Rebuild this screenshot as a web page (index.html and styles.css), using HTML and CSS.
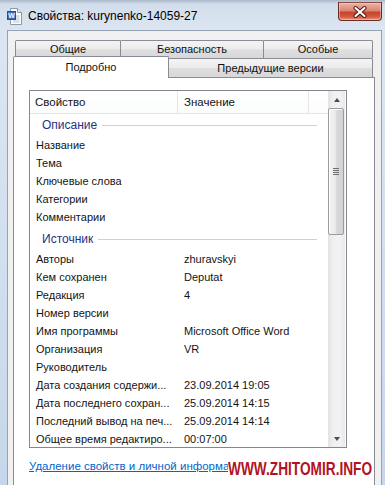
FILE: index.html
```html
<!DOCTYPE html>
<html lang="ru">
<head>
<meta charset="utf-8">
<title>Свойства</title>
<link rel="stylesheet" href="styles.css">
</head>
<body>
<div class="window">
  <div class="titlebar">
    <svg class="app-icon" width="15" height="17" viewBox="0 0 15 17">
      <path d="M3.5 0.5 H10.5 L14.5 4.5 V16.5 H3.5 Z" fill="#fbfcfd" stroke="#8e99a8"/>
      <path d="M10.5 0.5 V4.5 H14.5" fill="#e6ebf1" stroke="#8e99a8"/>
      <line x1="6" y1="8" x2="12.5" y2="8" stroke="#b7c3d2"/>
      <line x1="6" y1="10" x2="12.5" y2="10" stroke="#b7c3d2"/>
      <line x1="6" y1="12" x2="12.5" y2="12" stroke="#b7c3d2"/>
      <line x1="6" y1="14" x2="12.5" y2="14" stroke="#b7c3d2"/>
      <rect x="0.5" y="3.5" width="8" height="8" fill="#3d6ec0" stroke="#24509a"/>
      <text x="4.5" y="10.3" font-family="Liberation Sans, sans-serif" font-size="7" font-weight="bold" fill="#fff" text-anchor="middle">W</text>
    </svg>
    <span class="title">Свойства: kurynenko-14059-27</span>
    <div class="close">
      <svg width="14" height="12" viewBox="0 0 14 12">
        <path d="M2.5 2 L11.5 10 M11.5 2 L2.5 10" stroke="#4a1208" stroke-width="4" stroke-linecap="round"/>
        <path d="M2.5 2 L11.5 10 M11.5 2 L2.5 10" stroke="#ffffff" stroke-width="2.2" stroke-linecap="round"/>
      </svg>
    </div>
  </div>

  <div class="client">
    <div class="tabrow row1">
      <div class="tab t-general">Общие</div>
      <div class="tab t-security">Безопасность</div>
      <div class="tab t-custom">Особые</div>
    </div>
    <div class="tabrow row2">
      <div class="tab selected t-details">Подробно</div>
      <div class="tab t-previous">Предыдущие версии</div>
    </div>

    <div class="panel">
      <div class="listview">
        <div class="lv-main">
          <div class="lv-head">
            <div class="hcell h-key">Свойство</div>
            <div class="hcell h-val">Значение</div>
            <div class="hcell h-fill"></div>
          </div>
          <div class="lv-body">
            <div class="group">Описание</div>
            <div class="row"><span class="k">Название</span><span class="v"></span></div>
            <div class="row"><span class="k">Тема</span><span class="v"></span></div>
            <div class="row"><span class="k">Ключевые слова</span><span class="v"></span></div>
            <div class="row"><span class="k">Категории</span><span class="v"></span></div>
            <div class="row"><span class="k">Комментарии</span><span class="v"></span></div>
            <div class="group group-next">Источник</div>
            <div class="row"><span class="k">Авторы</span><span class="v">zhuravskyi</span></div>
            <div class="row"><span class="k">Кем сохранен</span><span class="v">Deputat</span></div>
            <div class="row"><span class="k">Редакция</span><span class="v">4</span></div>
            <div class="row"><span class="k">Номер версии</span><span class="v"></span></div>
            <div class="row"><span class="k">Имя программы</span><span class="v">Microsoft Office Word</span></div>
            <div class="row"><span class="k">Организация</span><span class="v">VR</span></div>
            <div class="row"><span class="k">Руководитель</span><span class="v"></span></div>
            <div class="row"><span class="k">Дата создания содержи...</span><span class="v">23.09.2014 19:05</span></div>
            <div class="row"><span class="k">Дата последнего сохран...</span><span class="v">25.09.2014 14:15</span></div>
            <div class="row"><span class="k">Последний вывод на печ...</span><span class="v">25.09.2014 14:14</span></div>
            <div class="row"><span class="k">Общее время редактиро...</span><span class="v">00:07:00</span></div>
          </div>
        </div>
        <div class="scrollbar">
          <div class="sb-btn"><span class="arrow-up"></span></div>
          <div class="sb-thumb"><span class="grip"></span></div>
          <div class="sb-track"></div>
          <div class="sb-btn"><span class="arrow-down"></span></div>
        </div>
      </div>
      <div class="link-wrap"><a class="link" href="#">Удаление свойств и личной информации</a></div>
    </div>
  </div>

  <div class="watermark">WWW.ZHITOMIR.INFO</div>
</div>
</body>
</html>
```

FILE: styles.css
```css
* { box-sizing: border-box; }

html, body {
  margin: 0;
  padding: 0;
}

body {
  width: 385px;
  height: 485px;
  overflow: hidden;
  font-family: "Liberation Sans", Arial, sans-serif;
  font-size: 11px;
  color: #141414;
}

.window {
  position: relative;
  height: 485px;
  display: flex;
  flex-direction: column;
  background: linear-gradient(to bottom, #a9b7c8 0, #d2deec 4px, #dce6f2 30px, #c6d7eb 100%);
}

/* ---------- title bar ---------- */
.titlebar {
  height: 30px;
  flex: none;
  display: flex;
  align-items: flex-start;
}

.app-icon {
  margin: 8px 0 0 7px;
  flex: none;
}

.title {
  margin-left: 6px;
  padding-top: 9px;
  font-size: 12px;
  line-height: 14px;
  color: #000;
}

.close {
  margin-left: auto;
  margin-right: 3px;
  margin-top: 2px;
  width: 44px;
  height: 19px;
  border: 1px solid #6a2b22;
  border-top-color: #8e4a3e;
  border-radius: 0 0 4px 4px;
  background: linear-gradient(to bottom, #eab3a5 0%, #d98673 45%, #c5442c 55%, #cf5a3f 80%, #e5957c 100%);
  display: flex;
  align-items: center;
  justify-content: center;
  box-shadow: inset 0 0 0 1px rgba(255, 220, 210, 0.45);
}

/* ---------- client area ---------- */
.client {
  flex: 1;
  margin: 0 3px 0 7px;
  border: 1px solid #96a3b4;
  border-bottom: none;
  background: #f0f0f0;
  padding: 9px 0 0 5px;
  display: flex;
  flex-direction: column;
}

.tabrow {
  display: flex;
  align-items: flex-start;
  position: relative;
}

.row1 {
  margin-left: 2px;
  height: 18px;
}

.row2 {
  margin-top: -2px;
  height: 21px;
  z-index: 2;
}

.tab {
  text-align: center;
  border: 1px solid #898c95;
  border-bottom: none;
  border-radius: 2px 2px 0 0;
  background: linear-gradient(to bottom, #f4f4f4 0%, #ebebeb 48%, #dedede 52%, #d8d8d8 100%);
  color: #111;
  white-space: nowrap;
  font-size: 11px;
}

.row1 .tab {
  height: 18px;
  line-height: 17px;
}

.t-general { width: 106px; }
.t-security { width: 144px; margin-left: -1px; }
.t-custom { width: 110px; margin-left: -1px; }

.t-details { width: 156px; }
.t-previous { width: 205px; margin-left: -1px; }

.row2 .tab {
  margin-top: 2px;
  height: 19px;
  line-height: 18px;
}

.row2 .tab.selected {
  margin-top: 0;
  height: 22px;
  line-height: 20px;
  background: #fff;
  position: relative;
  z-index: 3;
}

/* ---------- panel ---------- */
.panel {
  width: 362px;
  flex: 1;
  border: 1px solid #898c95;
  border-bottom: none;
  background: #fff;
  padding: 12px 0 0 15px;
  position: relative;
  z-index: 1;
}

.listview {
  width: 318px;
  height: 358px;
  border: 1px solid #828790;
  display: flex;
  overflow: hidden;
  background: #fff;
}

.lv-main {
  width: 298px;
  flex: none;
  overflow: hidden;
}

.lv-head {
  display: flex;
  height: 23px;
  border-bottom: 1px solid #e5e5e5;
  background: linear-gradient(to bottom, #ffffff, #fbfcfc);
}

.hcell {
  line-height: 22px;
  white-space: nowrap;
  font-size: 11.5px;
}

.h-key {
  width: 148px;
  padding-left: 5px;
  border-right: 1px solid #e5e5e5;
}

.h-val {
  width: 131px;
  padding-left: 6px;
  border-right: 1px solid #e5e5e5;
}

.h-fill { flex: 1; }

.group {
  height: 22px;
  display: flex;
  align-items: center;
  padding-left: 12px;
  color: #1e3287;
  font-size: 12px;
  white-space: nowrap;
}

.group::after {
  content: "";
  flex: 1;
  height: 1px;
  background: #c9d2e0;
  margin: 0 11px 0 5px;
}

.group-next { margin-top: 2px; }

.row {
  display: flex;
  height: 18px;
  line-height: 18px;
  white-space: nowrap;
  font-size: 11px;
}

.k {
  width: 148px;
  flex: none;
  padding-left: 6px;
}

.v {
  padding-left: 6px;
}

/* ---------- scrollbar ---------- */
.scrollbar {
  width: 17px;
  flex: none;
  display: flex;
  flex-direction: column;
  background: linear-gradient(to right, #e3e3e3 0%, #f0f0f0 30%, #f2f2f2 70%, #e8e8e8 100%);
}

.sb-btn {
  height: 17px;
  flex: none;
  display: flex;
  align-items: center;
  justify-content: center;
}

.arrow-up {
  width: 0;
  height: 0;
  border-left: 3.5px solid transparent;
  border-right: 3.5px solid transparent;
  border-bottom: 4px solid #4d4d4d;
}

.arrow-down {
  width: 0;
  height: 0;
  border-left: 3.5px solid transparent;
  border-right: 3.5px solid transparent;
  border-top: 4px solid #4d4d4d;
}

.sb-thumb {
  height: 127px;
  flex: none;
  margin: 0 1px 0 0;
  border: 1px solid #9b9b9b;
  border-radius: 2px;
  background: linear-gradient(to right, #f4f4f4 0%, #eaeaea 45%, #d9d9d9 55%, #d2d2d2 100%);
  box-shadow: inset 1px 1px 0 #fdfdfd;
  display: flex;
  align-items: center;
  justify-content: center;
}

.grip {
  width: 6px;
  height: 7px;
  background: repeating-linear-gradient(to bottom, #6e6e6e 0, #6e6e6e 1px, transparent 1px, transparent 2px);
}

.sb-track { flex: 1; }

/* ---------- link ---------- */
.link-wrap {
  margin-top: 11px;
  width: 199px;
  overflow: hidden;
  white-space: nowrap;
  line-height: 14px;
  font-size: 11.5px;
}

.link {
  color: #0066cc;
  text-decoration: underline;
}

/* ---------- watermark ---------- */
.watermark {
  position: absolute;
  z-index: 10;
  left: 228px;
  top: 460px;
  font-family: "Liberation Sans", Arial, sans-serif;
  font-weight: bold;
  font-size: 18px;
  line-height: 18px;
  color: #b3121f;
  white-space: nowrap;
  transform: scaleX(0.76);
  transform-origin: left top;
}
```
